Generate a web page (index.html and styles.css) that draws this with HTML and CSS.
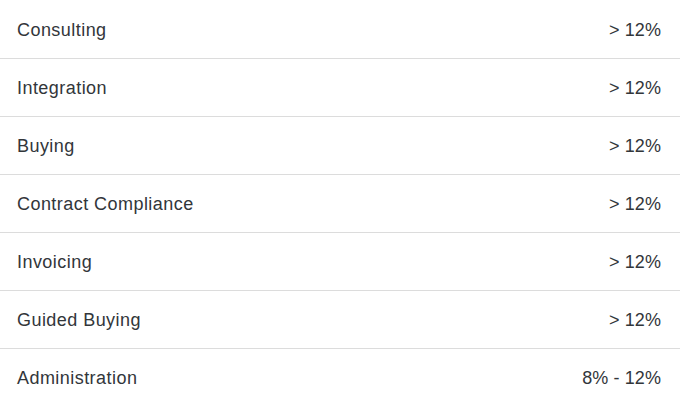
FILE: index.html
```html
<!DOCTYPE html>
<html>
<head>
<meta charset="utf-8">
<link rel="stylesheet" href="styles.css">
</head>
<body>
<div class="table">
  <div class="row"><span class="name">Consulting</span><span class="val">&gt; 12%</span></div>
  <div class="row"><span class="name">Integration</span><span class="val">&gt; 12%</span></div>
  <div class="row"><span class="name">Buying</span><span class="val">&gt; 12%</span></div>
  <div class="row"><span class="name">Contract Compliance</span><span class="val">&gt; 12%</span></div>
  <div class="row"><span class="name">Invoicing</span><span class="val">&gt; 12%</span></div>
  <div class="row"><span class="name">Guided Buying</span><span class="val">&gt; 12%</span></div>
  <div class="row"><span class="name">Administration</span><span class="val">8% - 12%</span></div>
</div>
</body>
</html>
```
FILE: styles.css
```css
html, body { margin: 0; padding: 0; background: #fff; }
body { font-family: "Liberation Sans", Arial, sans-serif; color: #32363a; }
.table { display: flex; flex-direction: column; padding-top: 1px; }
.row {
  display: flex;
  justify-content: space-between;
  align-items: center;
  height: 57px;
  padding: 0 19px 0 17px;
  border-bottom: 1px solid #dcdcdc;
  font-size: 18px;
  letter-spacing: 0.45px;
  line-height: 22px;
}
.row:last-child { border-bottom: none; }
.val { letter-spacing: 0.1px; }
```
